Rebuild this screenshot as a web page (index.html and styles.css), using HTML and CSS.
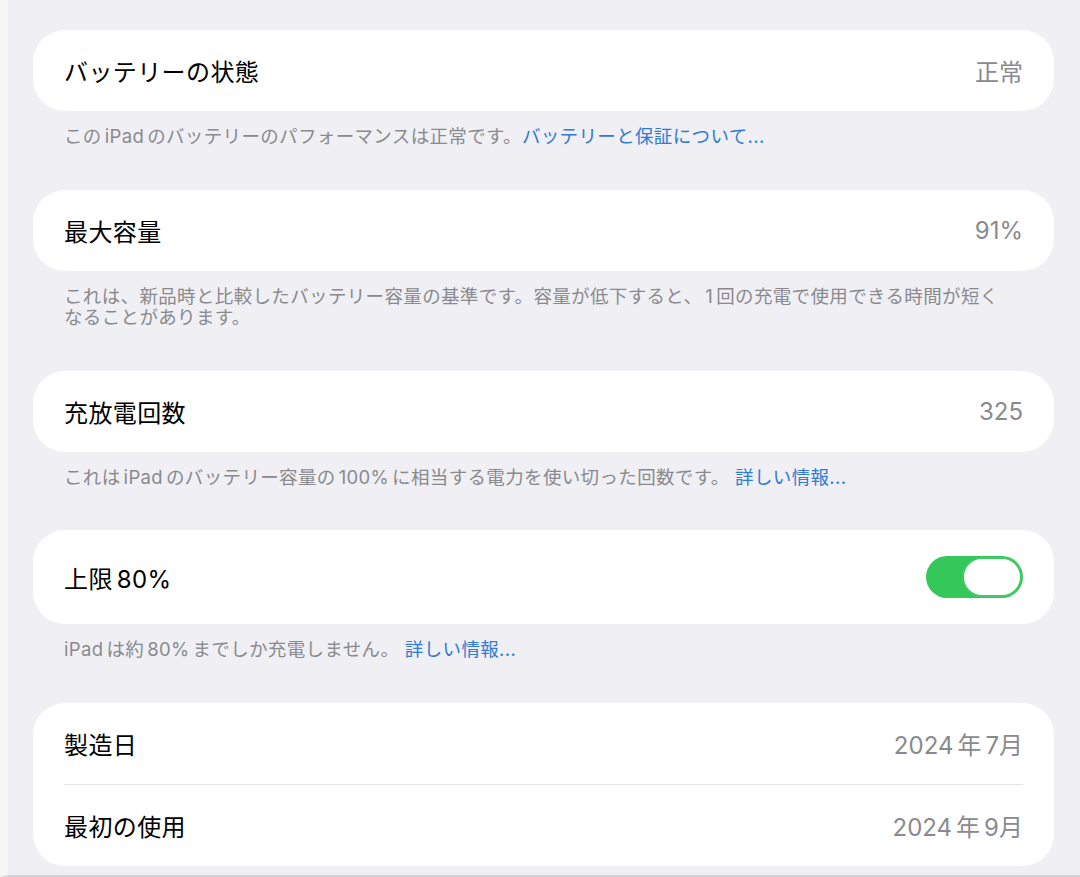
FILE: index.html
```html
<!DOCTYPE html>
<html lang="ja">
<head>
    <meta charset="UTF-8">
    <title>バッテリーの状態</title>
    <link rel="stylesheet" href="styles.css">
</head>
<body>
    <div class="page">
        <div class="content">
            <section class="group">
                <div class="card">
                    <div class="row">
                        <span class="label">バッテリーの状態</span>
                        <span class="value">正常</span>
                    </div>
                </div>
                <p class="note">この<span class="an">iPad</span>のバッテリーのパフォーマンスは正常です。<a class="link" href="#">バッテリーと保証について...</a></p>
            </section>

            <section class="group">
                <div class="card">
                    <div class="row">
                        <span class="label">最大容量</span>
                        <span class="value">91%</span>
                    </div>
                </div>
                <p class="note">これは、新品時と比較したバッテリー容量の基準です。容量が低下すると、<span class="an">1</span>回の充電で使用できる時間が短く<br>なることがあります。</p>
            </section>

            <section class="group">
                <div class="card">
                    <div class="row">
                        <span class="label">充放電回数</span>
                        <span class="value">325</span>
                    </div>
                </div>
                <p class="note">これは<span class="an">iPad</span>のバッテリー容量の<span class="an">100%</span>に相当する電力を使い切った回数です。 <a class="link" href="#">詳しい情報...</a></p>
            </section>

            <section class="group">
                <div class="card">
                    <div class="row row-toggle">
                        <span class="label">上限<span class="an-l">80%</span></span>
                        <div class="toggle on">
                            <div class="knob"></div>
                        </div>
                    </div>
                </div>
                <p class="note"><span class="an-s">iPad</span>は約<span class="an">80%</span>までしか充電しません。 <a class="link" href="#">詳しい情報...</a></p>
            </section>

            <section class="group">
                <div class="card">
                    <div class="row">
                        <span class="label">製造日</span>
                        <span class="value">2024<span class="an-v">年</span>7月</span>
                    </div>
                    <div class="row">
                        <span class="label">最初の使用</span>
                        <span class="value">2024<span class="an-v">年</span>9月</span>
                    </div>
                </div>
            </section>
        </div>
    </div>
</body>
</html>
```

FILE: styles.css
```css
:root {
    --bg: #efeff4;
    --card: #ffffff;
    --text: #000000;
    --muted: #8a8a8e;
    --link: #2f7bd6;
    --green: #34c759;
    --divider: #e3e3e8;
}
* {
    margin: 0;
    padding: 0;
    box-sizing: border-box;
}
body {
    font-family: 'Inter', 'Noto Sans CJK JP', sans-serif;
    background: var(--bg);
    color: var(--text);
    width: 1080px;
    height: 877px;
    overflow: hidden;
}
.page {
    display: flex;
    height: 877px;
    border-left: 8px solid #f6f6f8;
    border-bottom: 2px solid #d4d4d8;
}
.content {
    flex: 1;
    padding: 30px 26px 0 25px;
    display: flex;
    flex-direction: column;
}
.group {
    margin-bottom: 42px;
}
.card {
    background: var(--card);
    border-radius: 32px;
    padding: 0 31px;
}
.row {
    height: 81px;
    display: flex;
    align-items: center;
    justify-content: space-between;
}
.row + .row {
    border-top: 1px solid var(--divider);
    height: 82px;
}
.row-toggle {
    height: 94px;
}
.label {
    font-size: 24px;
    letter-spacing: 0.4px;
}
.value {
    font-size: 24px;
    color: var(--muted);
}
.note {
    padding: 15px 31px 0;
    font-size: 18.5px;
    line-height: 21.5px;
    letter-spacing: 0.35px;
    color: var(--muted);
}
.link {
    color: var(--link);
    text-decoration: none;
}
.an {
    margin: 0 3px;
}
.an-s {
    margin-right: 3px;
}
.an-l {
    margin-left: 4px;
}
.an-v {
    margin: 0 4px;
}
.toggle {
    width: 97px;
    height: 42px;
    border-radius: 21px;
    background: var(--green);
    display: flex;
    align-items: center;
    justify-content: flex-end;
    padding: 0 1px;
}
.knob {
    width: 60px;
    height: 40px;
    border-radius: 20px;
    background: #fff;
    border: 2.5px solid #43c965;
}
```
